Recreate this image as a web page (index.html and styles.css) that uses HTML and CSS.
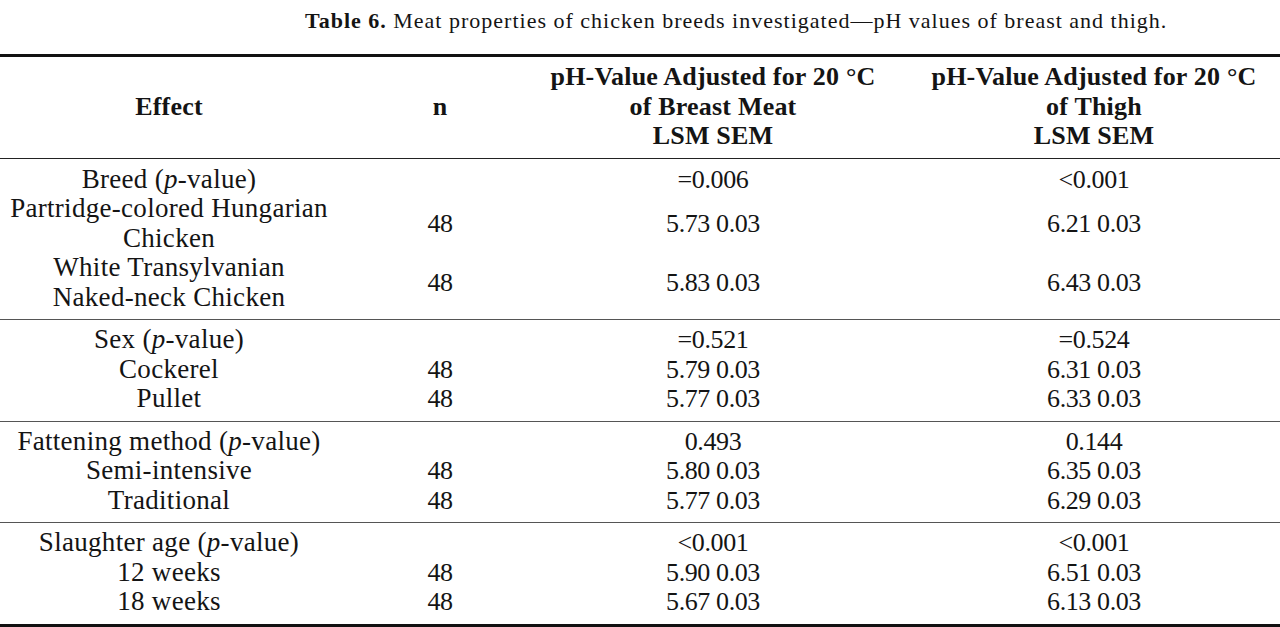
FILE: index.html
```html
<!DOCTYPE html>
<html>
<head>
<meta charset="utf-8">
<link rel="stylesheet" href="styles.css">
</head>
<body>
<div class="caption"><b>Table 6.</b> Meat properties of chicken breeds investigated—pH values of breast and thigh.</div>
<div class="table">
  <div class="head row">
    <div class="c1 mid">Effect</div>
    <div class="c2 mid">n</div>
    <div class="c3">pH-Value Adjusted for 20 °C<br>of Breast Meat<br>LSM SEM</div>
    <div class="c4">pH-Value Adjusted for 20 °C<br>of Thigh<br>LSM SEM</div>
  </div>
  <div class="section s1">
    <div class="row"><div class="c1">Breed (<i>p</i>-value)</div><div class="c2"></div><div class="c3">=0.006</div><div class="c4">&lt;0.001</div></div>
    <div class="row"><div class="c1">Partridge-colored Hungarian<br>Chicken</div><div class="c2 mid">48</div><div class="c3 mid">5.73 0.03</div><div class="c4 mid">6.21 0.03</div></div>
    <div class="row"><div class="c1">White Transylvanian<br>Naked-neck Chicken</div><div class="c2 mid">48</div><div class="c3 mid">5.83 0.03</div><div class="c4 mid">6.43 0.03</div></div>
  </div>
  <div class="section">
    <div class="row"><div class="c1">Sex (<i>p</i>-value)</div><div class="c2"></div><div class="c3">=0.521</div><div class="c4">=0.524</div></div>
    <div class="row"><div class="c1">Cockerel</div><div class="c2">48</div><div class="c3">5.79 0.03</div><div class="c4">6.31 0.03</div></div>
    <div class="row"><div class="c1">Pullet</div><div class="c2">48</div><div class="c3">5.77 0.03</div><div class="c4">6.33 0.03</div></div>
  </div>
  <div class="section">
    <div class="row"><div class="c1">Fattening method (<i>p</i>-value)</div><div class="c2"></div><div class="c3">0.493</div><div class="c4">0.144</div></div>
    <div class="row"><div class="c1">Semi-intensive</div><div class="c2">48</div><div class="c3">5.80 0.03</div><div class="c4">6.35 0.03</div></div>
    <div class="row"><div class="c1">Traditional</div><div class="c2">48</div><div class="c3">5.77 0.03</div><div class="c4">6.29 0.03</div></div>
  </div>
  <div class="section last">
    <div class="row"><div class="c1">Slaughter age (<i>p</i>-value)</div><div class="c2"></div><div class="c3">&lt;0.001</div><div class="c4">&lt;0.001</div></div>
    <div class="row"><div class="c1">12 weeks</div><div class="c2">48</div><div class="c3">5.90 0.03</div><div class="c4">6.51 0.03</div></div>
    <div class="row"><div class="c1">18 weeks</div><div class="c2">48</div><div class="c3">5.67 0.03</div><div class="c4">6.13 0.03</div></div>
  </div>
</div>
</body>
</html>
```
FILE: styles.css
```css
html, body {
  margin: 0;
  padding: 0;
  background: #fff;
}
body {
  font-family: "Liberation Serif", "Times New Roman", serif;
  color: #141414;
  width: 1280px;
  height: 627px;
  overflow: hidden;
}
.caption {
  font-size: 22px;
  line-height: 42px;
  height: 42px;
  padding-left: 305px;
  letter-spacing: 1px;
  white-space: nowrap;
}
.caption b {
  font-weight: bold;
}
.table {
  margin-top: 12px;
  border-top: 3px solid #111;
  border-bottom: 3px solid #111;
  font-size: 27px;
  line-height: 29.5px;
  letter-spacing: 0.3px;
}
.row {
  display: grid;
  grid-template-columns: 338px 204px 342px 396px;
  align-items: start;
  text-align: center;
  white-space: nowrap;
}
.row > div {
  display: block;
}
.row > .mid {
  align-self: center;
}
.section .c2,
.section .c3,
.section .c4 {
  font-size: 26px;
  letter-spacing: -0.4px;
}
.c4 {
  padding-left: 24px;
}
.head {
  padding: 5px 0 7px;
  font-weight: bold;
  font-size: 26px;
  letter-spacing: 0.2px;
  border-bottom: 1px solid #222;
}
.section {
  padding: 5px 0 7px;
  border-bottom: 1px solid #555;
}
.section.s1 {
  padding-top: 6px;
}
.section.last {
  border-bottom: none;
}
```
